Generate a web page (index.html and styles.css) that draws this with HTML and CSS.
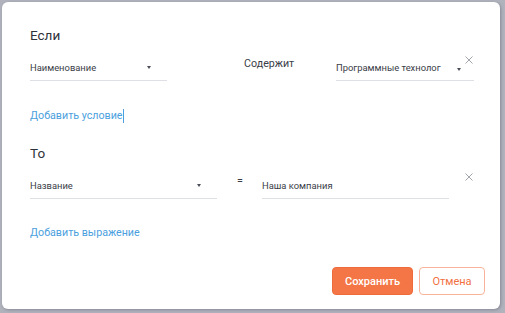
FILE: index.html
```html
<!DOCTYPE html>
<html lang="ru">
<head>
<meta charset="utf-8">
<title>Условия</title>
<link rel="stylesheet" href="styles.css">
</head>
<body>
<div class="dialog">
  <div class="title">Если</div>
  <div class="row">
    <div class="field sel1"><span class="val">Наименование</span><span class="arrow"></span></div>
    <div class="label lbl-contains">Содержит</div>
    <div class="field sel2"><span class="val">Программные технолог</span><span class="arrow low"></span></div>
    <span class="close">
      <svg width="8" height="8" viewBox="0 0 8 8"><path d="M0.5 0.5L7.5 7.5M7.5 0.5L0.5 7.5" stroke="#a3a5ad" stroke-width="1" fill="none"/></svg>
    </span>
  </div>
  <div class="link link1">Добавить условие<span class="caret"></span></div>

  <div class="title title2">То</div>
  <div class="row">
    <div class="field sel3"><span class="val">Название</span><span class="arrow"></span></div>
    <div class="label lbl-eq">=</div>
    <div class="field inp"><span class="val">Наша компания</span></div>
    <span class="close close2">
      <svg width="8" height="8" viewBox="0 0 8 8"><path d="M0.5 0.5L7.5 7.5M7.5 0.5L0.5 7.5" stroke="#a3a5ad" stroke-width="1" fill="none"/></svg>
    </span>
  </div>
  <div class="link link2">Добавить выражение</div>

  <div class="actions">
    <button class="btn btn-save">Сохранить</button>
    <button class="btn btn-cancel">Отмена</button>
  </div>
</div>
</body>
</html>
```
FILE: styles.css
```css
html, body {
  margin: 0;
  padding: 0;
}
body {
  width: 505px;
  height: 313px;
  background: #b0b2bc;
  font-family: Roboto, "Liberation Sans", sans-serif;
  color: #363a44;
  overflow: hidden;
}
.dialog {
  box-sizing: border-box;
  margin: 2px 0 0 2px;
  width: 498px;
  height: 307px;
  background: #fff;
  border-radius: 6px;
  box-shadow: 1px 1px 3px rgba(60, 62, 80, 0.35);
  padding: 24px 15px 0 28px;
  display: flex;
  flex-direction: column;
}
.title {
  font-size: 13.5px;
  line-height: 18px;
  height: 18px;
  color: #2f323a;
}
.title2 {
  margin-top: 20px;
}
.row {
  position: relative;
  display: flex;
  align-items: flex-start;
  margin-top: 10px;
}
.field {
  box-sizing: border-box;
  height: 27px;
  border-bottom: 1px solid #dfe0e6;
  display: flex;
  align-items: center;
  font-size: 9.4px;
  color: #3a3d47;
}
.val {
  flex: 1;
  white-space: nowrap;
  overflow: hidden;
}
.arrow {
  width: 0;
  height: 0;
  border-left: 2.5px solid transparent;
  border-right: 2.5px solid transparent;
  border-top: 3px solid #4a4d57;
  margin-right: 16px;
}
.arrow.low {
  margin-top: 5px;
  margin-right: 13px;
}
.sel1 { width: 137px; }
.sel2 { width: 138px; margin-left: 42px; }
.sel3 { width: 187px; }
.inp { width: 187px; margin-left: 21px; }
.label {
  font-size: 10.7px;
  line-height: 17px;
  color: #3a3d47;
}
.lbl-contains {
  margin-left: 77px;
  width: 50px;
  padding-top: 1px;
  white-space: nowrap;
}
.lbl-eq {
  margin-left: 20px;
  width: 4px;
  padding-top: 0;
}
.close {
  position: absolute;
  right: 12px;
  top: 2px;
  width: 8px;
  height: 8px;
  line-height: 0;
}
.close2 {
  top: 1px;
}
.link {
  font-size: 10.7px;
  line-height: 17px;
  color: #4b9fde;
  display: flex;
  align-items: center;
}
.link1 {
  margin-top: 26px;
}
.link2 {
  margin-top: 25px;
}
.caret {
  display: inline-block;
  width: 1px;
  height: 14px;
  background: #4b9fde;
  margin-left: 0;
}
.actions {
  display: flex;
  justify-content: flex-end;
  gap: 6px;
  margin-top: 26px;
}
.btn {
  box-sizing: border-box;
  height: 28px;
  border-radius: 4px;
  font-family: Roboto, "Liberation Sans", sans-serif;
  font-size: 11px;
  padding: 0;
  cursor: pointer;
}
.btn-save {
  width: 81px;
  background: #f47646;
  border: 1px solid #ee6c3c;
  color: #fff;
  font-weight: 500;
}
.btn-cancel {
  width: 66px;
  background: #fff;
  border: 1px solid #f7b49a;
  color: #f26f3f;
}
```
